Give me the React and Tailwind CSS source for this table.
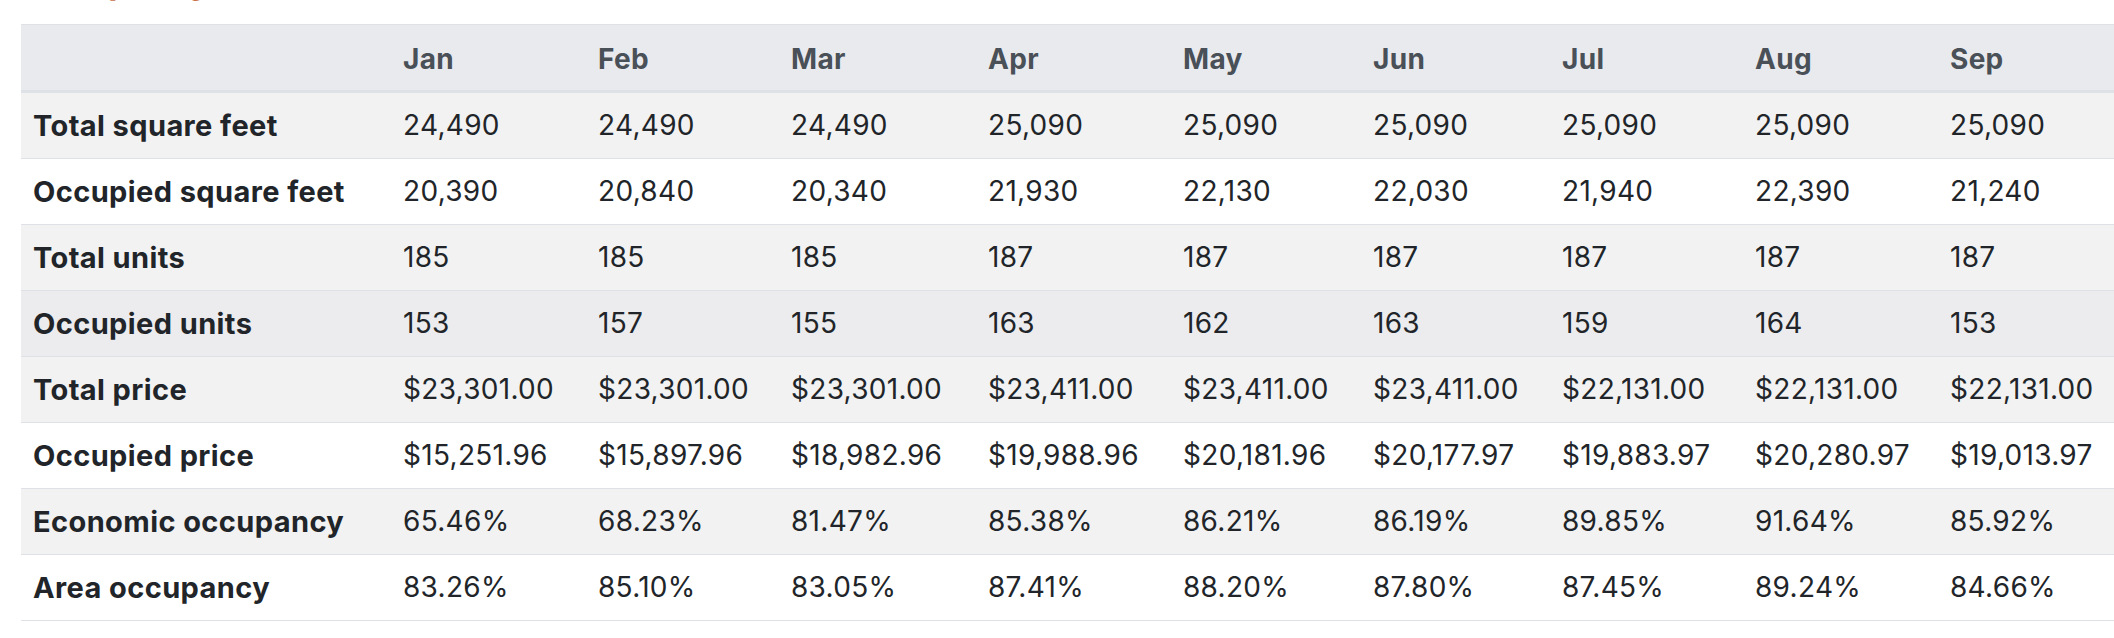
import React from 'react';

const months = ['Jan', 'Feb', 'Mar', 'Apr', 'May', 'Jun', 'Jul', 'Aug', 'Sep'];
const colWidths = ['w-[195px]', 'w-[193px]', 'w-[197px]', 'w-[195px]', 'w-[190px]', 'w-[189px]', 'w-[193px]', 'w-[195px]', 'w-[195px]'];

const rows = [
    { label: 'Total square feet', values: ['24,490', '24,490', '24,490', '25,090', '25,090', '25,090', '25,090', '25,090', '25,090'] },
    { label: 'Occupied square feet', values: ['20,390', '20,840', '20,340', '21,930', '22,130', '22,030', '21,940', '22,390', '21,240'] },
    { label: 'Total units', values: ['185', '185', '185', '187', '187', '187', '187', '187', '187'] },
    { label: 'Occupied units', values: ['153', '157', '155', '163', '162', '163', '159', '164', '153'], hover: true },
    { label: 'Total price', values: ['$23,301.00', '$23,301.00', '$23,301.00', '$23,411.00', '$23,411.00', '$23,411.00', '$22,131.00', '$22,131.00', '$22,131.00'] },
    { label: 'Occupied price', values: ['$15,251.96', '$15,897.96', '$18,982.96', '$19,988.96', '$20,181.96', '$20,177.97', '$19,883.97', '$20,280.97', '$19,013.97'] },
    { label: 'Economic occupancy', values: ['65.46%', '68.23%', '81.47%', '85.38%', '86.21%', '86.19%', '89.85%', '91.64%', '85.92%'] },
    { label: 'Area occupancy', values: ['83.26%', '85.10%', '83.05%', '87.41%', '88.20%', '87.80%', '87.45%', '89.24%', '84.66%'] },
];

const OccupancyTable = () => {
    const rowBg = (row, index) => {
        if (row.hover) return 'bg-[#ececee]';
        return index % 2 === 0 ? 'bg-[#f2f2f2]' : 'bg-white';
    };

    return (
        <div className="w-[2114px] h-[638px] overflow-hidden bg-white text-[#212529]" style={{ fontFamily: 'Inter, "Noto Sans", sans-serif' }}>
            {/* heading sits above the viewport, only the descender shows */}
            <div className="h-[24px] pl-[21px] overflow-hidden">
                <h2 className="mt-[-35px] text-[34px] leading-none font-bold text-[#c9704a]">Occupancy</h2>
            </div>
            <div className="pl-[21px] overflow-hidden">
                <table className="table-fixed border-collapse w-[2112px] text-[28px] leading-[41px] tracking-[0.3px]">
                    <thead>
                        <tr className="bg-[#e9eaee] border-t border-[#dee2e6]">
                            <th className="w-[370px] px-3 pt-[14px] pb-[10px] border-b-[3px] border-[#dee2e6]"></th>
                            {months.map((m, i) => (
                                <th key={m} className={`${colWidths[i]} px-3 pt-[14px] pb-[10px] text-left font-bold text-[#495057] border-b-[3px] border-[#dee2e6]`}>
                                    {m}
                                </th>
                            ))}
                        </tr>
                    </thead>
                    <tbody>
                        {rows.map((row, index) => (
                            <tr key={row.label} className={`${rowBg(row, index)} border-b border-[#dee2e6]`}>
                                <td className="px-3 py-3 text-[29px] tracking-[0.4px] font-bold whitespace-nowrap">{row.label}</td>
                                {row.values.map((v, i) => (
                                    <td key={i} className="px-3 py-3 whitespace-nowrap">{v}</td>
                                ))}
                            </tr>
                        ))}
                    </tbody>
                </table>
            </div>
        </div>
    );
};

export default function App() {
    return <OccupancyTable />;
}
